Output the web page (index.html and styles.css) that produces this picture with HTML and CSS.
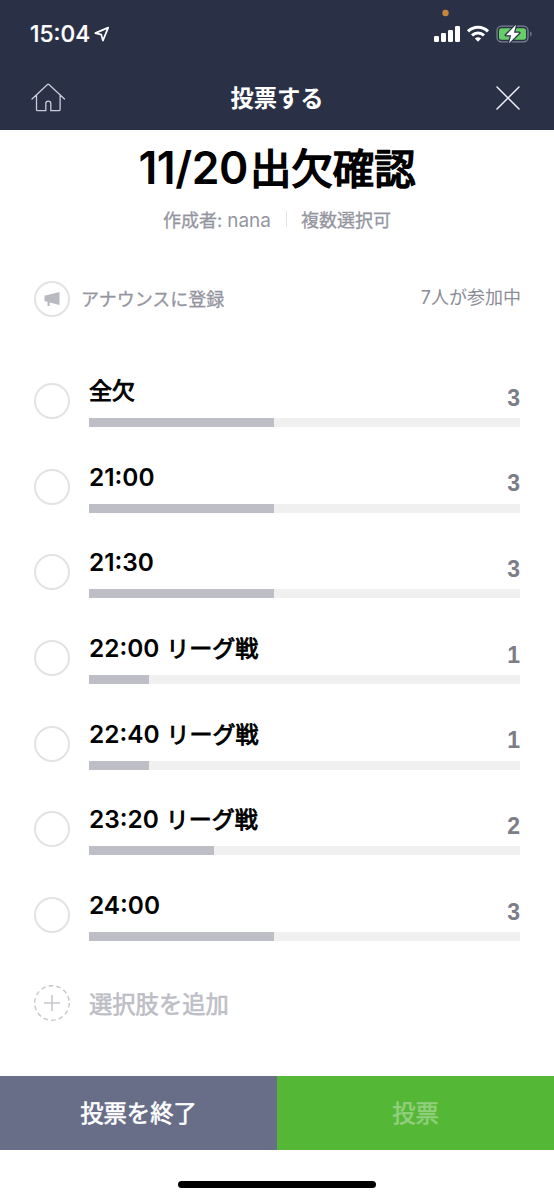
FILE: index.html
```html
<!DOCTYPE html>
<html lang="ja">
<head>
<meta charset="utf-8">
<title>投票する</title>
<link rel="stylesheet" href="styles.css">
</head>
<body>
<div class="screen">
  <header class="header">
    <div class="status">
      <span class="clock">15:04</span>
      <svg class="location" width="16" height="16" viewBox="0 0 16 16"><path d="M14.200 1.600 1.300 7.100l6 1.500 1.600 6z" fill="none" stroke="#fff" stroke-width="1.700" stroke-linejoin="round"/></svg>
      <svg class="indicators" width="104" height="36" viewBox="0 0 104 36">
        <circle cx="16.500" cy="5" r="3.200" fill="#c4873c"/>
        <g fill="#fff">
          <rect x="5" y="28" width="5" height="6" rx="1.200"/>
          <rect x="12" y="25" width="5" height="9" rx="1.200"/>
          <rect x="19" y="22" width="5" height="12" rx="1.200"/>
          <rect x="26" y="18" width="5" height="16" rx="1.200"/>
        </g>
        <g fill="none" stroke="#fff" stroke-width="3.100">
          <path d="M39 23.300c5.600-5.500 14.400-5.500 20 0"/>
          <path d="M43 27.400c3.500-3.200 8.500-3.200 12 0"/>
        </g>
        <path d="M45.900 30.400c1.900-1.500 4.300-1.500 6.200 0L49 33.700z" fill="#fff"/>
        <rect x="68" y="18.200" width="31" height="15.600" rx="4.500" fill="none" stroke="#7c8193" stroke-width="1.300"/>
        <rect x="70" y="20.200" width="27" height="11.600" rx="2.500" fill="#65cf66"/>
        <path d="M101.200 23.500c2 1 2 4 0 5z" fill="#7c8193"/>
        <path d="M87 16.800 76.800 27.200h5.400L80 35.200 90.400 24.800H85z" fill="#fff" stroke="#2a3147" stroke-width="2.400" paint-order="stroke" stroke-linejoin="round"/>
      </svg>
    </div>
    <div class="nav">
      <svg class="nav-icon" width="36" height="32" viewBox="0 0 36 32"><path d="M2 17 17.500 2.500Q18.200 2 19 2.500L34.500 17M6.500 13v14.500q0 1.200 1.200 1.200h8.100v-7.200c0-3.300 5-3.300 5 0v7.200h8.100q1.200 0 1.200-1.200V13" fill="none" stroke="#c9cdd9" stroke-width="1.300" stroke-linecap="round"/></svg>
      <h1 class="nav-title">投票する</h1>
      <svg class="nav-icon" width="26" height="26" viewBox="0 0 26 26"><path d="M2 2l22 22M24 2 2 24" fill="none" stroke="#eef0f6" stroke-width="1.500" stroke-linecap="round"/></svg>
    </div>
  </header>

  <main class="poll">
    <h2 class="poll-title"><span class="poll-date">11/20</span>出欠確認</h2>
    <div class="poll-meta"><span>作成者: <span class="author">nana</span></span><span class="divider"></span><span>複数選択可</span></div>

    <div class="announce">
      <span class="circle"><svg width="16" height="16" viewBox="0 0 16 16"><path d="M.5 4.800 15.500 1v13L5.700 11.400V15H3.500v-4.200l-3-.8z" fill="#b9bac1"/></svg></span>
      <span class="announce-label">アナウンスに登録</span>
      <span class="joined">7人が参加中</span>
    </div>

    <ul class="options">
      <li class="option"><span class="circle"></span><div class="choice"><span class="label">全欠</span><span class="count">3</span><div class="track"><div class="fill" style="width:43%"></div></div></div></li>
      <li class="option"><span class="circle"></span><div class="choice"><span class="label"><span class="time">21:00</span></span><span class="count">3</span><div class="track"><div class="fill" style="width:43%"></div></div></div></li>
      <li class="option"><span class="circle"></span><div class="choice"><span class="label"><span class="time">21:30</span></span><span class="count">3</span><div class="track"><div class="fill" style="width:43%"></div></div></div></li>
      <li class="option"><span class="circle"></span><div class="choice"><span class="label"><span class="time">22:00</span> リーグ戦</span><span class="count">1</span><div class="track"><div class="fill" style="width:14%"></div></div></div></li>
      <li class="option"><span class="circle"></span><div class="choice"><span class="label"><span class="time">22:40</span> リーグ戦</span><span class="count">1</span><div class="track"><div class="fill" style="width:14%"></div></div></div></li>
      <li class="option"><span class="circle"></span><div class="choice"><span class="label"><span class="time">23:20</span> リーグ戦</span><span class="count">2</span><div class="track"><div class="fill" style="width:29%"></div></div></div></li>
      <li class="option"><span class="circle"></span><div class="choice"><span class="label"><span class="time">24:00</span></span><span class="count">3</span><div class="track"><div class="fill" style="width:43%"></div></div></div></li>
    </ul>

    <div class="add">
      <svg width="36" height="36" viewBox="0 0 36 36" fill="none" stroke="#c6c7cd"><circle cx="18" cy="18" r="17.300" stroke-width="1.400" stroke-dasharray="4.600 3.164"/><path d="M10 18h16M18 10v16" stroke-width="1.600"/></svg>
      <span>選択肢を追加</span>
    </div>
  </main>

  <footer class="actions">
    <div class="action end">投票を終了</div>
    <div class="action vote">投票</div>
  </footer>
  <div class="home-area"><div class="home-bar"></div></div>
</div>
</body>
</html>
```
FILE: styles.css
```css
* { box-sizing: border-box; }
body {
  margin: 0;
  background: #fff;
  font-family: Inter, "Noto Sans CJK JP", sans-serif;
}
h1, h2, ul { margin: 0; padding: 0; }
.screen {
  width: 554px;
  height: 1200px;
  display: flex;
  flex-direction: column;
  overflow: hidden;
}
.header { height: 130px; background: #2a3147; color: #fff; flex: none; }
.status { height: 66px; display: flex; align-items: flex-start; padding: 0 21px 0 30px; }
.clock { font-size: 22.8px; font-weight: 500; line-height: 28px; margin-top: 20px; width: 60px; white-space: nowrap; -webkit-text-stroke: 0.2px; }
.location { margin: 26px 0 0 4px; }
.indicators { margin: 8px 0 0 auto; }
.nav { height: 64px; display: flex; align-items: center; justify-content: space-between; padding: 0 33px 0 30px; }
.nav-title { font-size: 23.3px; line-height: 34px; font-weight: 700; margin: 2px 0 0 -7px; }

.poll { height: 946px; flex: none; padding: 17px 34px 0; }
.poll-title {
  font-size: 41.4px;
  font-weight: 400;
  line-height: 42px;
  text-align: center;
  white-space: nowrap;
  -webkit-text-stroke: 1.7px;
}
.poll-date { font-size: 44.5px; font-weight: 600; letter-spacing: -0.4px; margin-right: 2px; -webkit-text-stroke: 0; }
.poll-meta {
  display: flex;
  justify-content: center;
  align-items: center;
  height: 24px;
  margin-top: 17px;
  color: #9495a0;
  font-size: 18px;
  -webkit-text-stroke: 0.3px;
}
.author { font-size: 18.9px; -webkit-text-stroke: 0; }
.divider { width: 1px; height: 16px; margin: 0 14px 0 15px; background: #e1e1e6; }
.announce { display: flex; align-items: center; height: 36px; margin-top: 50px; color: #9495a0; font-size: 18px; }
.circle {
  display: flex;
  align-items: center;
  justify-content: center;
  width: 36px;
  height: 36px;
  flex: none;
  border: 2px solid #e3e3e6;
  border-radius: 50%;
}
.announce-label { margin: -2px 0 0 11px; -webkit-text-stroke: 0.3px; }
.joined { margin: -7px -1px 0 auto; color: #8b8c97; }

.options { list-style: none; padding-top: 53px; }
.option { display: flex; height: 85.7px; }
.option > .circle { margin-top: 13px; }
.choice {
  flex: 1;
  margin-left: 19px;
  display: grid;
  grid-template-columns: 1fr auto;
  grid-template-rows: 48px 9px;
}
.label { font-size: 23px; line-height: 34px; font-weight: 400; margin-top: 4px; white-space: nowrap; -webkit-text-stroke: 0.9px; }
.time { font-size: 24.4px; font-weight: 600; margin-right: 0.5px; -webkit-text-stroke: 0; }
.count { font-family: "Liberation Sans", Arial, sans-serif; font-size: 23px; line-height: 28px; font-weight: 700; color: #7c7d87; margin-top: 13.5px; }
.track { grid-column: 1 / 3; height: 9px; background: #f0f0f0; }
.fill { height: 9px; background: #bdbec6; }
.add { display: flex; align-items: center; gap: 19px; height: 36px; margin-top: 15px; color: #bdbec6; font-size: 23.3px; -webkit-text-stroke: 0.6px; }
.add svg { flex: none; }

.actions { display: flex; height: 74px; flex: none; }
.action { flex: 1; display: flex; align-items: center; justify-content: center; padding-bottom: 2px; font-size: 23.3px; -webkit-text-stroke: 0.6px; }
.end { background: #686e88; color: #fff; }
.vote { background: #55b736; color: #91cf7d; }
.home-area { flex: 1; display: flex; justify-content: center; padding-top: 31px; }
.home-bar { width: 198px; height: 7px; border-radius: 4px; background: #000; }
```
